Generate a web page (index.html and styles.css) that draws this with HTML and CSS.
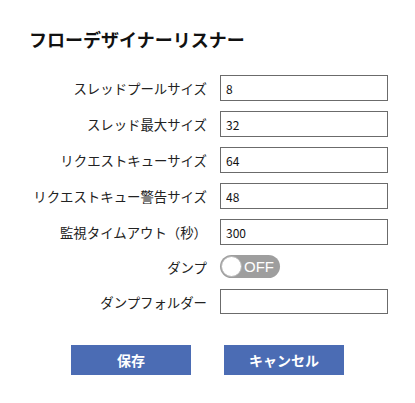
FILE: index.html
```html
<!DOCTYPE html>
<html lang="ja">
<head>
<meta charset="utf-8">
<link rel="stylesheet" href="styles.css">
</head>
<body>
<div class="page">
  <h1 class="title">フローデザイナーリスナー</h1>
  <div class="form">
    <label class="label">スレッドプールサイズ</label>
    <input class="field" type="text" value="8">
    <label class="label">スレッド最大サイズ</label>
    <input class="field" type="text" value="32">
    <label class="label">リクエストキューサイズ</label>
    <input class="field" type="text" value="64">
    <label class="label">リクエストキュー警告サイズ</label>
    <input class="field" type="text" value="48">
    <label class="label">監視タイムアウト（秒）</label>
    <input class="field" type="text" value="300">
    <label class="label">ダンプ</label>
    <div class="toggle-cell">
      <span class="toggle"><span class="knob"></span><span class="toggle-text">OFF</span></span>
    </div>
    <label class="label">ダンプフォルダー</label>
    <input class="field" type="text" value="">
  </div>
  <div class="buttons">
    <button class="btn">保存</button>
    <button class="btn">キャンセル</button>
  </div>
</div>
</body>
</html>
```
FILE: styles.css
```css
html, body {
  margin: 0;
  padding: 0;
  background: #fff;
}
body {
  font-family: "Noto Sans CJK JP", "Noto Sans", sans-serif;
  color: #222;
}
.page {
  padding-top: 27px;
}
.title {
  margin: 0 0 0 29px;
  font-size: 18px;
  line-height: 24px;
  font-weight: bold;
  color: #111;
}
.form {
  margin-top: 24px;
  display: grid;
  grid-template-columns: 207px 168px;
  grid-template-rows: repeat(5, 26px) 24px 25px;
  column-gap: 13px;
  row-gap: 10px;
}
.label {
  font-size: 13.4px;
  text-align: right;
  align-self: center;
  white-space: nowrap;
  line-height: 20px;
  color: #222;
}
.field {
  box-sizing: border-box;
  width: 168px;
  height: 26px;
  margin: 0;
  border: 1px solid #6b6b6b;
  padding: 0 5px;
  font-family: "Noto Sans CJK JP", "Noto Sans", sans-serif;
  font-size: 12px;
  color: #111;
  background: #fff;
  outline: none;
}
.form > .field:last-child {
  height: 25px;
}
.toggle-cell {
  display: flex;
  align-items: flex-start;
}
.toggle {
  box-sizing: border-box;
  width: 60px;
  height: 23px;
  border-radius: 12px;
  background: #9e9e9e;
  display: flex;
  align-items: center;
  padding-left: 1px;
  gap: 2px;
}
.knob {
  width: 21px;
  height: 21px;
  border-radius: 50%;
  background: #fff;
  box-sizing: border-box;
  border: 1px solid #b5b5b5;
}
.toggle-text {
  color: #fff;
  font-family: "Liberation Sans", Arial, sans-serif;
  font-size: 15px;
  line-height: 23px;
}
.buttons {
  margin-top: 31px;
  margin-left: 71px;
  display: flex;
  gap: 33px;
}
.btn {
  width: 120px;
  height: 30px;
  border: none;
  margin: 0;
  padding: 0;
  background: #4b6cb4;
  color: #fff;
  font-family: "Noto Sans CJK JP", "Noto Sans", sans-serif;
  font-size: 14px;
  font-weight: bold;
}
```
